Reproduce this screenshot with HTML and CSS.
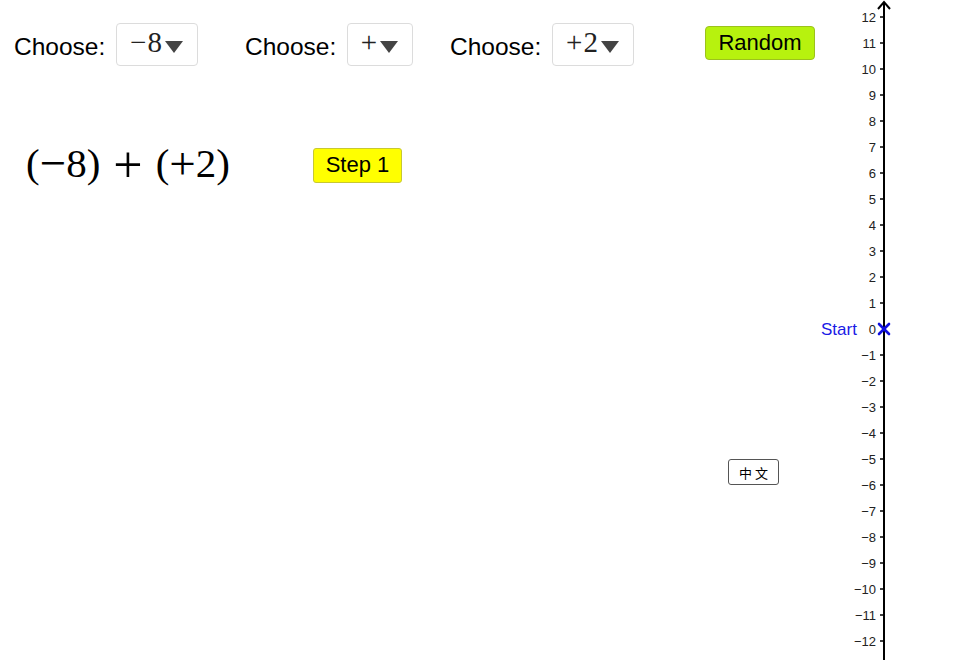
FILE: index.html
```html
<!DOCTYPE html>
<html>
<head>
<meta charset="utf-8">
<link rel="stylesheet" href="styles.css">
</head>
<body>
<div class="app">
  <div class="toolbar">
    <div class="choice first">
      <span class="label">Choose:</span>
      <div class="dropdown w82"><span class="math">−8</span><svg class="tri" width="20" height="14" viewBox="0 0 20 14"><polygon points="1,1 19,1 10,13" fill="#444"/></svg></div>
    </div>
    <div class="choice second">
      <span class="label">Choose:</span>
      <div class="dropdown w66"><span class="math">+</span><svg class="tri" width="20" height="14" viewBox="0 0 20 14"><polygon points="1,1 19,1 10,13" fill="#444"/></svg></div>
    </div>
    <div class="choice third">
      <span class="label">Choose:</span>
      <div class="dropdown w82"><span class="math">+2</span><svg class="tri" width="20" height="14" viewBox="0 0 20 14"><polygon points="1,1 19,1 10,13" fill="#444"/></svg></div>
    </div>
    <button class="btn random">Random</button>
  </div>
  <div class="exprow">
    <div class="expr"><span>(<span class="un">−</span>8)</span><span class="op">+</span><span>(<span class="un">+</span>2)</span></div>
    <button class="btn step">Step 1</button>
  </div>

  <button class="lang">中 文</button>

  <svg class="axis" width="160" height="660" viewBox="800 0 160 660">
    <line x1="884" y1="2" x2="884" y2="660" stroke="#000" stroke-width="2"/>
    <polyline points="878,9 884,2 890,9" fill="none" stroke="#000" stroke-width="2"/>
    <g stroke="#000" stroke-width="1.5">
      <line x1="880" y1="17" x2="884" y2="17"/><line x1="880" y1="43" x2="884" y2="43"/>
      <line x1="880" y1="69" x2="884" y2="69"/><line x1="880" y1="95" x2="884" y2="95"/>
      <line x1="880" y1="121" x2="884" y2="121"/><line x1="880" y1="147" x2="884" y2="147"/>
      <line x1="880" y1="173" x2="884" y2="173"/><line x1="880" y1="199" x2="884" y2="199"/>
      <line x1="880" y1="225" x2="884" y2="225"/><line x1="880" y1="251" x2="884" y2="251"/>
      <line x1="880" y1="277" x2="884" y2="277"/><line x1="880" y1="303" x2="884" y2="303"/>
      <line x1="880" y1="355" x2="884" y2="355"/><line x1="880" y1="381" x2="884" y2="381"/>
      <line x1="880" y1="407" x2="884" y2="407"/><line x1="880" y1="433" x2="884" y2="433"/>
      <line x1="880" y1="459" x2="884" y2="459"/><line x1="880" y1="485" x2="884" y2="485"/>
      <line x1="880" y1="511" x2="884" y2="511"/><line x1="880" y1="537" x2="884" y2="537"/>
      <line x1="880" y1="563" x2="884" y2="563"/><line x1="880" y1="589" x2="884" y2="589"/>
      <line x1="880" y1="615" x2="884" y2="615"/><line x1="880" y1="641" x2="884" y2="641"/>
    </g>
    <g class="ticklabels" text-anchor="end">
      <text x="876" y="22">12</text><text x="876" y="48">11</text>
      <text x="876" y="74">10</text><text x="876" y="100">9</text>
      <text x="876" y="126">8</text><text x="876" y="152">7</text>
      <text x="876" y="178">6</text><text x="876" y="204">5</text>
      <text x="876" y="230">4</text><text x="876" y="256">3</text>
      <text x="876" y="282">2</text><text x="876" y="308">1</text>
      <text x="876" y="334">0</text>
      <text x="876" y="360">−1</text><text x="876" y="386">−2</text>
      <text x="876" y="412">−3</text><text x="876" y="438">−4</text>
      <text x="876" y="464">−5</text><text x="876" y="490">−6</text>
      <text x="876" y="516">−7</text><text x="876" y="542">−8</text>
      <text x="876" y="568">−9</text><text x="876" y="594">−10</text>
      <text x="876" y="620">−11</text><text x="876" y="646">−12</text>
    </g>
    <text class="start" x="821" y="335">Start</text>
    <g stroke="#1010e0" stroke-width="2.6" stroke-linecap="round">
      <line x1="879" y1="324" x2="889" y2="334"/>
      <line x1="889" y1="324" x2="879" y2="334"/>
    </g>
  </svg>
</div>
</body>
</html>
```
FILE: styles.css
```css
html, body {
  margin: 0;
  padding: 0;
  background: #fff;
}
.app {
  position: relative;
  width: 960px;
  height: 660px;
  overflow: hidden;
  font-family: "Liberation Sans", Arial, sans-serif;
  color: #000;
}
.toolbar {
  display: flex;
  align-items: center;
  padding-top: 23px;
  height: 43px;
}
.choice {
  display: flex;
  align-items: center;
  gap: 11px;
}
.choice.first { margin-left: 14px; }
.choice.second { margin-left: 47px; }
.choice.third { margin-left: 37px; }
.label {
  font-size: 24.5px;
  position: relative;
  top: 2px;
  width: 91px;
  white-space: nowrap;
}
.dropdown {
  box-sizing: border-box;
  height: 43px;
  border: 1px solid #dcdcdc;
  border-radius: 4px;
  display: flex;
  align-items: center;
  justify-content: center;
  gap: 1px;
  background: #fff;
}
.w82 { width: 82px; }
.w66 { width: 66px; }
.math {
  font-family: "Liberation Serif", serif;
  font-size: 29px;
  color: #222;
  position: relative;
  top: -2px;
  letter-spacing: 1px;
}
.tri { display: block; margin-top: 4px; }
.btn {
  font-family: "Liberation Sans", Arial, sans-serif;
  font-size: 22px;
  color: #000;
  border-radius: 4px;
  padding: 0;
  box-sizing: border-box;
  cursor: pointer;
}
.random {
  margin-left: 71px;
  width: 110px;
  height: 34px;
  background: #b7f20e;
  border: 1px solid #9cc21c;
  margin-top: -4px;
}
.exprow {
  display: flex;
  align-items: center;
  margin-top: 77px;
  height: 44px;
}
.expr {
  margin-left: 26px;
  font-family: "Liberation Serif", serif;
  font-size: 41px;
  white-space: nowrap;
  width: 287px;
  display: flex;
  align-items: baseline;
  position: relative;
  top: -6px;
}
.un {
  font-size: 47px;
  position: relative;
  top: 2px;
}
.op {
  font-size: 52px;
  margin: 0 13px;
  position: relative;
  top: 5px;
}
.step {
  width: 89px;
  height: 35px;
  background: #ffff00;
  border: 1px solid #c8c832;
  border-radius: 3px;
}
.lang {
  position: absolute;
  left: 728px;
  top: 459px;
  width: 51px;
  height: 26px;
  box-sizing: border-box;
  border: 1px solid #555;
  border-radius: 3px;
  background: #fff;
  font-family: "Noto Sans CJK SC", "DejaVu Serif", serif;
  font-size: 13px;
  padding: 0;
  color: #000;
}
.axis {
  position: absolute;
  left: 800px;
  top: 0;
}
.ticklabels text {
  font-family: "Liberation Sans", Arial, sans-serif;
  font-size: 13px;
  fill: #222;
}
.start {
  font-family: "Liberation Sans", Arial, sans-serif;
  font-size: 17px;
  fill: #1a1ae6;
}
```
